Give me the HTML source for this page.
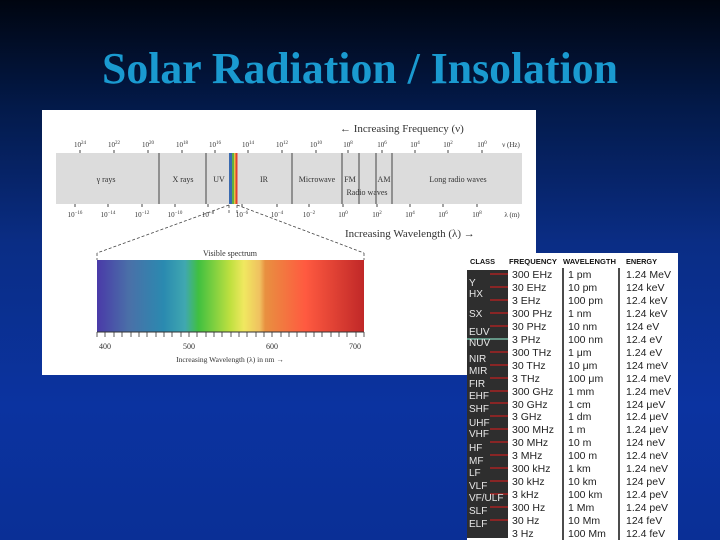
<!DOCTYPE html>
<html><head><meta charset="utf-8"><style>
html,body{margin:0;padding:0;width:720px;height:540px;overflow:hidden}
body{background:linear-gradient(180deg,#000510 0%,#031a4a 20%,#0a2d85 45%,#0b33a0 75%,#0a2f96 100%);position:relative;font-family:"Liberation Sans",sans-serif}
svg{position:absolute;left:0;top:0}
</style></head><body>
<svg width="720" height="540" viewBox="0 0 720 540" xmlns="http://www.w3.org/2000/svg">
<defs>
<linearGradient id="vis" x1="0" x2="1">
<stop offset="0" stop-color="#4a3aa8"/><stop offset="0.12" stop-color="#4a70a8"/><stop offset="0.25" stop-color="#2a8ab0"/><stop offset="0.33" stop-color="#40a8b0"/><stop offset="0.38" stop-color="#40c040"/><stop offset="0.5" stop-color="#c0e040"/><stop offset="0.55" stop-color="#f0e860"/><stop offset="0.61" stop-color="#f0c060"/><stop offset="0.63" stop-color="#e89040"/><stop offset="0.78" stop-color="#ff5a40"/><stop offset="1" stop-color="#c02828"/>
</linearGradient>
</defs>
<text x="360" y="83" text-anchor="middle" textLength="516" lengthAdjust="spacingAndGlyphs" font-family="Liberation Serif,serif" font-weight="bold" font-size="44" fill="#1a9ad0">Solar Radiation / Insolation</text>
<rect x="42" y="110" width="494" height="265" fill="#fff"/>
<g font-family="Liberation Serif,serif" fill="#333">
<text x="340" y="132" font-size="11">← Increasing Frequency (ν)</text>
<g font-size="7" text-anchor="middle">
<text x="80" y="147">10<tspan dy="-3" font-size="5">24</tspan></text><text x="114" y="147">10<tspan dy="-3" font-size="5">22</tspan></text><text x="148" y="147">10<tspan dy="-3" font-size="5">20</tspan></text><text x="182" y="147">10<tspan dy="-3" font-size="5">18</tspan></text><text x="215" y="147">10<tspan dy="-3" font-size="5">16</tspan></text><text x="248" y="147">10<tspan dy="-3" font-size="5">14</tspan></text><text x="282" y="147">10<tspan dy="-3" font-size="5">12</tspan></text><text x="316" y="147">10<tspan dy="-3" font-size="5">10</tspan></text><text x="348" y="147">10<tspan dy="-3" font-size="5">8</tspan></text><text x="382" y="147">10<tspan dy="-3" font-size="5">6</tspan></text><text x="415" y="147">10<tspan dy="-3" font-size="5">4</tspan></text><text x="448" y="147">10<tspan dy="-3" font-size="5">2</tspan></text><text x="482" y="147">10<tspan dy="-3" font-size="5">0</tspan></text><text x="511" y="147">ν (Hz)</text>
<text x="75" y="217">10<tspan dy="-3" font-size="5">−16</tspan></text><text x="108" y="217">10<tspan dy="-3" font-size="5">−14</tspan></text><text x="142" y="217">10<tspan dy="-3" font-size="5">−12</tspan></text><text x="175" y="217">10<tspan dy="-3" font-size="5">−10</tspan></text><text x="208" y="217">10<tspan dy="-3" font-size="5">−8</tspan></text><text x="242" y="217">10<tspan dy="-3" font-size="5">−6</tspan></text><text x="277" y="217">10<tspan dy="-3" font-size="5">−4</tspan></text><text x="309" y="217">10<tspan dy="-3" font-size="5">−2</tspan></text><text x="343" y="217">10<tspan dy="-3" font-size="5">0</tspan></text><text x="377" y="217">10<tspan dy="-3" font-size="5">2</tspan></text><text x="410" y="217">10<tspan dy="-3" font-size="5">4</tspan></text><text x="443" y="217">10<tspan dy="-3" font-size="5">6</tspan></text><text x="477" y="217">10<tspan dy="-3" font-size="5">8</tspan></text><text x="512" y="217">λ (m)</text>
</g>
<rect x="56" y="153" width="466" height="51" fill="#dcdcdc"/>
<g stroke="#444" stroke-width="1">
<path d="M80 150v3M114 150v3M148 150v3M182 150v3M215 150v3M248 150v3M282 150v3M316 150v3M348 150v3M382 150v3M415 150v3M448 150v3M482 150v3"/>
<path d="M75 204v3M108 204v3M142 204v3M175 204v3M208 204v3M242 204v3M277 204v3M309 204v3M343 204v3M377 204v3M410 204v3M443 204v3M477 204v3"/>
<path d="M159 153v51M206 153v51M292 153v51M342 153v51M359 153v51M376 153v51M392 153v51"/>
<path d="M229 205l-132 48M237 205l127 48M97 253v7M364 253v7M229 205v10M237 205v10" stroke-dasharray="3,2" stroke-width="0.8"/>
</g>
<rect x="229" y="153" width="3" height="51" fill="#3a6ab0"/><rect x="232" y="153" width="2" height="51" fill="#60b040"/><rect x="234" y="153" width="1.5" height="51" fill="#e8c040"/><rect x="235.5" y="153" width="2" height="51" fill="#e04030"/>
<g font-size="8" text-anchor="middle">
<text x="106" y="182">γ rays</text><text x="183" y="182">X rays</text><text x="219" y="182">UV</text><text x="264" y="182">IR</text><text x="317" y="182">Microwave</text><text x="350" y="182">FM</text><text x="384" y="182">AM</text><text x="458" y="182">Long radio waves</text><text x="367" y="195">Radio waves</text>
</g>
<text x="345" y="237" font-size="11">Increasing Wavelength (λ) →</text>
<text x="230" y="256" font-size="8" text-anchor="middle">Visible spectrum</text>
<rect x="97" y="260" width="267" height="72" fill="url(#vis)"/>
<path d="M97 332h267" stroke="#333" stroke-width="1"/>
<g font-size="8" text-anchor="middle"><text x="105" y="349">400</text><text x="189" y="349">500</text><text x="272" y="349">600</text><text x="355" y="349">700</text></g>
<text x="230" y="362" font-size="7.5" text-anchor="middle">Increasing Wavelength (λ) in nm →</text>
</g>
<path d="M97 332v5M105 332v5M114 332v5M122 332v5M131 332v5M139 332v5M147 332v5M156 332v5M164 332v5M172 332v5M181 332v5M189 332v5M197 332v5M206 332v5M214 332v5M222 332v5M231 332v5M239 332v5M247 332v5M256 332v5M264 332v5M272 332v5M281 332v5M289 332v5M297 332v5M306 332v5M314 332v5M322 332v5M331 332v5M339 332v5M347 332v5M356 332v5M364 332v5" stroke="#333" stroke-width="0.8"/>
<rect x="467" y="253" width="211" height="287" fill="#fff"/>
<rect x="467" y="270" width="41" height="268" fill="#2e2e2e"/>
<g font-size="7" font-weight="bold" fill="#111">
<text x="470" y="264" textLength="25" lengthAdjust="spacingAndGlyphs">CLASS</text><text x="509" y="264" textLength="48" lengthAdjust="spacingAndGlyphs">FREQUENCY</text><text x="563" y="264" textLength="53" lengthAdjust="spacingAndGlyphs">WAVELENGTH</text><text x="626" y="264" textLength="31" lengthAdjust="spacingAndGlyphs">ENERGY</text>
</g>
<path d="M563 268v272M619 268v272" stroke="#111" stroke-width="1.5"/>
<g stroke="#c02020" stroke-width="1.2">
<path d="M490 274h18M490 287h18M490 300h18M490 313h18M490 326h18M490 352h18M490 365h18M490 378h18M490 391h18M490 403h18M490 416h18M490 429h18M490 442h18M490 455h18M490 468h18M490 481h18M490 494h18M490 507h18M490 520h18"/>
</g>
<path d="M467 339h41" stroke="#9fd" stroke-width="1"/>
<g font-size="10" fill="#e8e8e8">
<text x="469" y="286">Y</text><text x="469" y="297">HX</text><text x="469" y="317">SX</text><text x="469" y="335">EUV</text><text x="469" y="346">NUV</text><text x="469" y="362">NIR</text><text x="469" y="374">MIR</text><text x="469" y="387">FIR</text><text x="469" y="399">EHF</text><text x="469" y="412">SHF</text><text x="469" y="426">UHF</text><text x="469" y="437">VHF</text><text x="469" y="451">HF</text><text x="469" y="464">MF</text><text x="469" y="476">LF</text><text x="469" y="489">VLF</text><text x="469" y="501">VF/ULF</text><text x="469" y="514">SLF</text><text x="469" y="527">ELF</text>
</g>
<g font-size="10.5" fill="#222">
<g transform="translate(512,0)">
<text y="278">300 EHz</text><text y="291">30 EHz</text><text y="304">3 EHz</text><text y="317">300 PHz</text><text y="330">30 PHz</text><text y="343">3 PHz</text><text y="356">300 THz</text><text y="369">30 THz</text><text y="382">3 THz</text><text y="395">300 GHz</text><text y="408">30 GHz</text><text y="420">3 GHz</text><text y="433">300 MHz</text><text y="446">30 MHz</text><text y="459">3 MHz</text><text y="472">300 kHz</text><text y="485">30 kHz</text><text y="498">3 kHz</text><text y="511">300 Hz</text><text y="524">30 Hz</text><text y="537">3 Hz</text>
</g>
<g transform="translate(568,0)">
<text y="278">1 pm</text><text y="291">10 pm</text><text y="304">100 pm</text><text y="317">1 nm</text><text y="330">10 nm</text><text y="343">100 nm</text><text y="356">1 μm</text><text y="369">10 μm</text><text y="382">100 μm</text><text y="395">1 mm</text><text y="408">1 cm</text><text y="420">1 dm</text><text y="433">1 m</text><text y="446">10 m</text><text y="459">100 m</text><text y="472">1 km</text><text y="485">10 km</text><text y="498">100 km</text><text y="511">1 Mm</text><text y="524">10 Mm</text><text y="537">100 Mm</text>
</g>
<g transform="translate(626,0)">
<text y="278">1.24 MeV</text><text y="291">124 keV</text><text y="304">12.4 keV</text><text y="317">1.24 keV</text><text y="330">124 eV</text><text y="343">12.4 eV</text><text y="356">1.24 eV</text><text y="369">124 meV</text><text y="382">12.4 meV</text><text y="395">1.24 meV</text><text y="408">124 μeV</text><text y="420">12.4 μeV</text><text y="433">1.24 μeV</text><text y="446">124 neV</text><text y="459">12.4 neV</text><text y="472">1.24 neV</text><text y="485">124 peV</text><text y="498">12.4 peV</text><text y="511">1.24 peV</text><text y="524">124 feV</text><text y="537">12.4 feV</text>
</g>
</g>
</svg>
</body></html>
